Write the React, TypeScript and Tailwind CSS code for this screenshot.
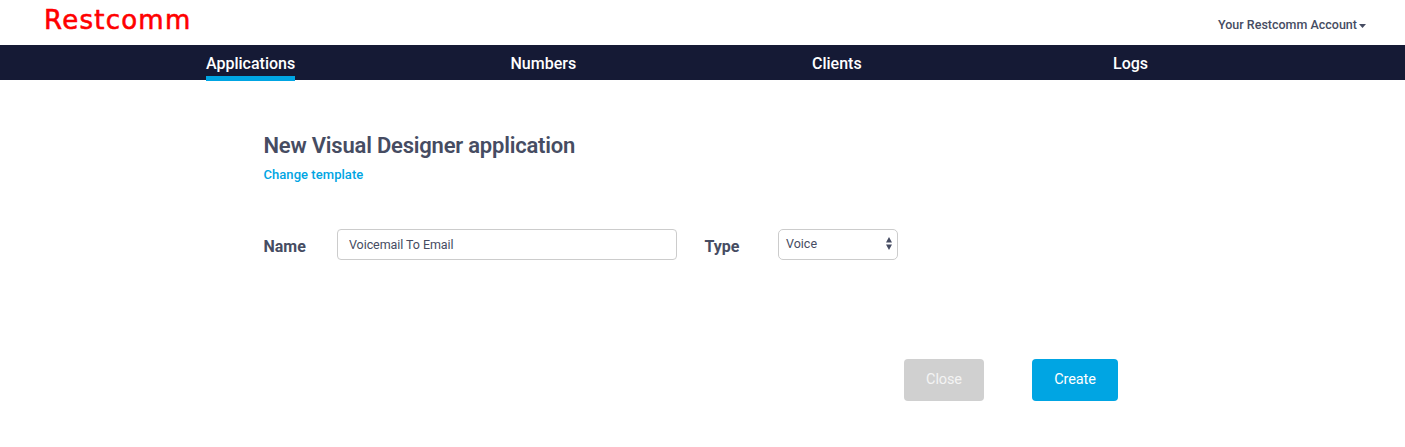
const navItems = [
  { label: 'Applications', width: 'w-[304.5px]', active: true },
  { label: 'Numbers', width: 'w-[301.5px]', active: false },
  { label: 'Clients', width: 'w-[301px]', active: false },
  { label: 'Logs', width: 'w-[200px]', active: false },
];

function Header() {
  return (
    <header className="flex h-[45px] items-start justify-between pl-[44px] pr-[39px]">
      <div className="pt-[5px] font-['DejaVu_Sans'] text-[26px] leading-[31px] tracking-[1.25px] text-[#ff0000] [-webkit-text-stroke:0.6px_#ff0000]">
        Restcomm
      </div>
      <button className="flex items-center gap-[2px] pt-[15px] text-[12.5px] leading-[20px] font-medium text-[#464c62]">
        Your Restcomm Account
        <svg width="7" height="4" viewBox="0 0 7 4" className="mt-[1px]" fill="currentColor">
          <path d="M0 0H7L3.5 4Z" />
        </svg>
      </button>
    </header>
  );
}

function Nav() {
  return (
    <nav className="flex h-[35px] bg-[#151a35] pl-[206px] text-[16px] leading-[31px] font-medium text-white">
      {navItems.map((item) => (
        <div key={item.label} className={item.width}>
          <a
            className={
              item.active
                ? 'inline-block h-[36px] border-b-5 border-[#00a5e3] pt-[3px] leading-[31px]'
                : 'inline-block pt-[3px]'
            }
          >
            {item.label}
          </a>
        </div>
      ))}
    </nav>
  );
}

export default function App() {
  return (
    <div className="min-h-[447px] bg-white font-[Roboto,sans-serif] text-[#464c62]">
      <Header />
      <Nav />
      <main className="pl-[263.5px] pt-[51px]">
        <h1 className="text-[22px] leading-[30px] font-semibold tracking-[-0.21px]">New Visual Designer application</h1>
        <a className="mt-[4px] block text-[13px] leading-[20px] font-medium tracking-[0.05px] text-[#00a5e3]">
          Change template
        </a>
        <form className="mt-[44px] flex h-[31px] items-start">
          <label className="w-[73.5px] pt-[6px] text-[16px] leading-[24px] font-bold">Name</label>
          <input
            className="h-[31px] w-[340px] rounded-[4px] border border-[#cccccc] px-[11px] text-[12.5px] tracking-[-0.07px] outline-none"
            defaultValue="Voicemail To Email"
          />
          <label className="ml-[27.5px] w-[73.5px] pt-[6px] text-[16px] leading-[24px] font-bold">Type</label>
          <div className="flex h-[31px] w-[120px] items-start justify-between rounded-[5px] border border-[#cccccc] pl-[7px] pr-[5px] text-[12.5px] leading-[20px]">
            <span className="pt-[4px]">Voice</span>
            <svg width="6" height="13" viewBox="0 0 6 13" className="mt-[7px]" fill="currentColor">
              <path d="M0 5.5L3 0L6 5.5ZM0 7.5H6L3 13Z" />
            </svg>
          </div>
        </form>
        <div className="mt-[99px] flex pl-[640.5px] text-[14.5px] leading-[22px] text-white">
          <button className="h-[42px] w-[80px] rounded-[4px] bg-[#d0d0d0] tracking-[-0.1px] text-[#f4f4f4]">Close</button>
          <button className="ml-[48px] h-[42px] w-[86px] rounded-[4px] bg-[#00a5e3] tracking-[-0.1px]">Create</button>
        </div>
      </main>
    </div>
  );
}
